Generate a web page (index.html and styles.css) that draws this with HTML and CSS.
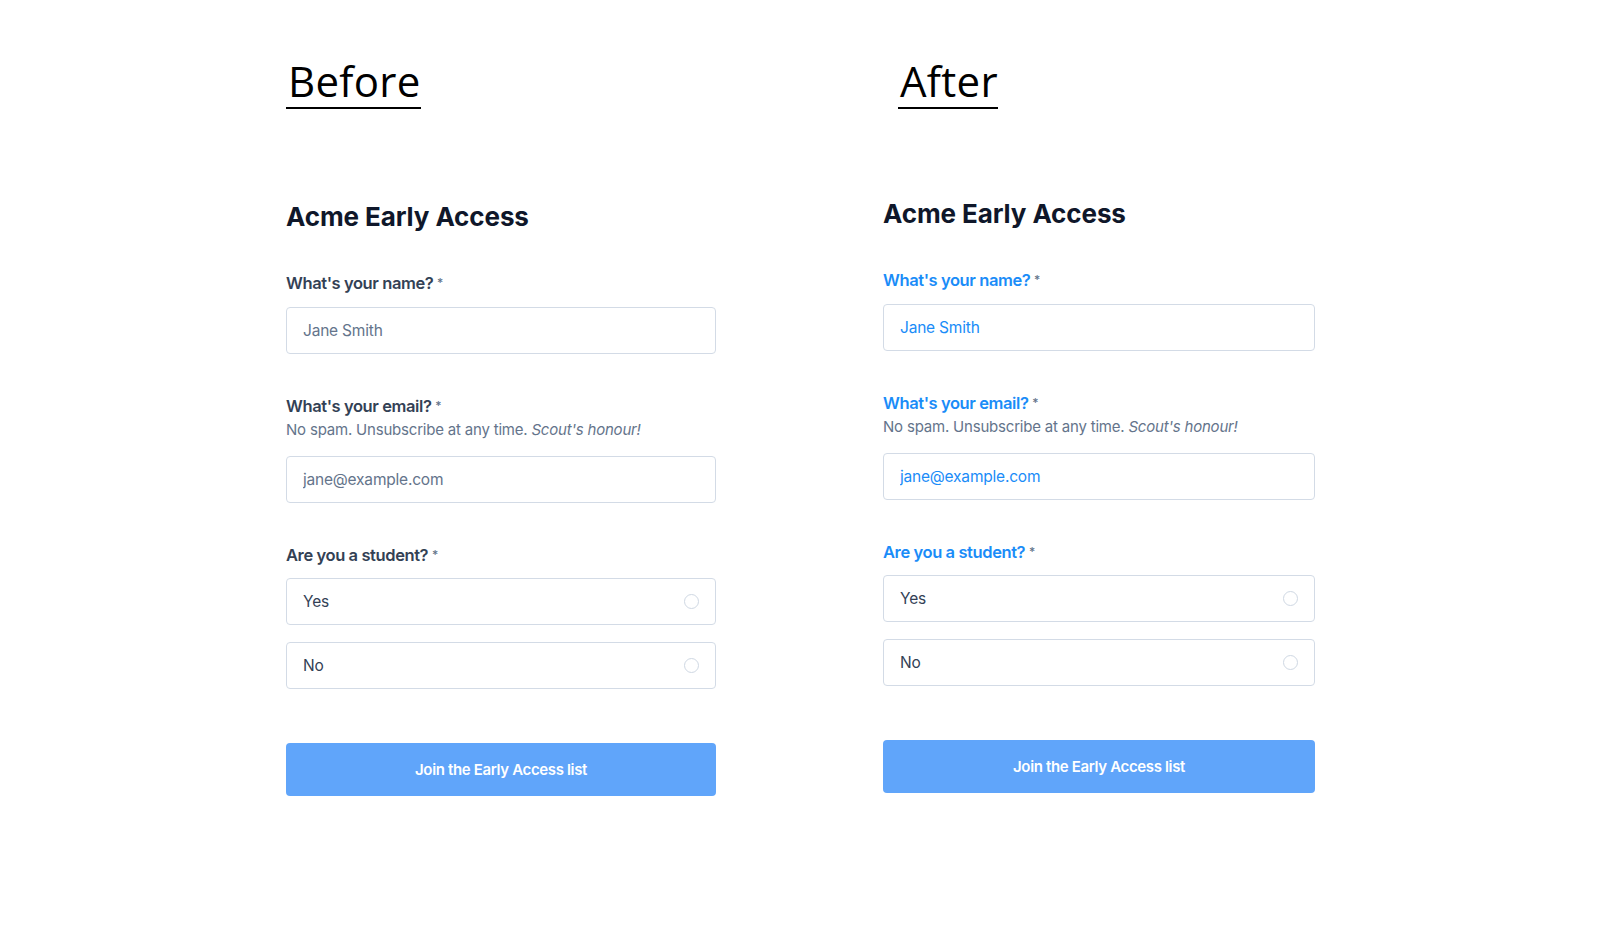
FILE: index.html
```html
<!DOCTYPE html>
<html lang="en">
<head>
  <meta charset="UTF-8" />
  <meta name="viewport" content="width=device-width, initial-scale=1.0" />
  <title>Acme Early Access – Before / After</title>
  <link rel="stylesheet" href="styles.css">
</head>
<body>
  <div class="compare">

    <section class="panel">
      <h1 class="panel-title"><span>Before</span></h1>

      <form class="signup">
        <h2 class="signup-title">Acme Early Access</h2>

        <div class="field">
          <label class="question" for="b-name">What's your name? <span class="req">*</span></label>
          <input type="text" id="b-name" placeholder="Jane Smith" />
        </div>

        <div class="field">
          <label class="question" for="b-email">What's your email? <span class="req">*</span></label>
          <p class="hint">No spam. Unsubscribe at any time. <em>Scout's honour!</em></p>
          <input type="email" id="b-email" placeholder="jane@example.com" />
        </div>

        <div class="field">
          <div class="question">Are you a student? <span class="req">*</span></div>
          <label class="option">Yes <span class="radio"></span></label>
          <label class="option">No <span class="radio"></span></label>
        </div>

        <button type="submit">Join the Early Access list</button>
      </form>
    </section>

    <section class="panel panel-after">
      <h1 class="panel-title"><span>After</span></h1>

      <form class="signup">
        <h2 class="signup-title">Acme Early Access</h2>

        <div class="field">
          <label class="question" for="a-name">What's your name? <span class="req">*</span></label>
          <input type="text" id="a-name" placeholder="Jane Smith" />
        </div>

        <div class="field">
          <label class="question" for="a-email">What's your email? <span class="req">*</span></label>
          <p class="hint">No spam. Unsubscribe at any time. <em>Scout's honour!</em></p>
          <input type="email" id="a-email" placeholder="jane@example.com" />
        </div>

        <div class="field">
          <div class="question">Are you a student? <span class="req">*</span></div>
          <label class="option">Yes <span class="radio"></span></label>
          <label class="option">No <span class="radio"></span></label>
        </div>

        <button type="submit">Join the Early Access list</button>
      </form>
    </section>

  </div>
</body>
</html>
```

FILE: styles.css
```css
body {
  margin: 0;
  background-color: #fff;
  font-family: 'Inter', 'Liberation Sans', sans-serif;
  color: #0f172a;
}

.compare {
  display: flex;
  padding: 57px 0 0 286px;
}

.panel {
  width: 430px;
}

.panel-after {
  margin-left: 167px;
  width: 432px;
}

.panel-title {
  margin: 0;
  font-family: 'Open Sans', 'Noto Sans', sans-serif;
  font-size: 42px;
  font-weight: 400;
  line-height: 48px;
  letter-spacing: 0.3px;
  color: #000;
}

.panel-title span {
  display: inline-block;
  padding: 0 0 2px 2px;
  border-bottom: 2px solid #000;
}

.panel-after .panel-title span {
  margin-left: 15px;
  padding-left: 2px;
}

.signup-title {
  margin: 92px 0 0;
  font-size: 26px;
  font-weight: 700;
  line-height: 32px;
  letter-spacing: -0.1px;
  color: #0f172a;
}

.panel-after .signup-title {
  margin-top: 89px;
}

.field {
  margin-top: 38px;
}

.field + .field {
  margin-top: 40px;
}

.question {
  display: block;
  font-size: 16.5px;
  font-weight: 600;
  line-height: 24px;
  letter-spacing: -0.4px;
  color: #334155;
  margin-bottom: 12px;
}

div.question {
  margin-bottom: 11px;
}

.panel-after .question {
  color: #1a8cf8;
}

.req {
  font-size: 12px;
  font-weight: 500;
  color: #64748b;
  vertical-align: 2px;
}

.hint {
  margin: -11px 0 15px;
  font-size: 15px;
  line-height: 22px;
  letter-spacing: -0.2px;
  color: #64748b;
}

input[type="text"],
input[type="email"] {
  display: block;
  width: 100%;
  height: 47px;
  margin: 0;
  padding: 0 16px;
  border: 1px solid #d3dbe6;
  border-radius: 4px;
  font-family: inherit;
  font-size: 15.5px;
  letter-spacing: -0.2px;
  color: #64748b;
  box-sizing: border-box;
  outline: none;
}

input::placeholder {
  color: #64748b;
}

.panel-after input::placeholder {
  color: #1a8cf8;
}

.option {
  display: flex;
  align-items: center;
  justify-content: space-between;
  height: 47px;
  margin: 0 0 17px;
  padding: 0 16px;
  border: 1px solid #d3dbe6;
  border-radius: 4px;
  box-sizing: border-box;
  font-size: 15.5px;
  font-weight: 400;
  letter-spacing: -0.2px;
  color: #334155;
}

.option:last-child {
  margin-bottom: 0;
}

.radio {
  width: 15px;
  height: 15px;
  border: 1px solid #cfd8e3;
  border-radius: 50%;
  box-sizing: border-box;
}

button {
  display: block;
  width: 100%;
  height: 53px;
  margin-top: 54px;
  background-color: #60a5fa;
  color: #fff;
  border: none;
  border-radius: 4px;
  font-family: inherit;
  font-size: 15px;
  font-weight: 600;
  letter-spacing: -0.35px;
  cursor: pointer;
}
```
